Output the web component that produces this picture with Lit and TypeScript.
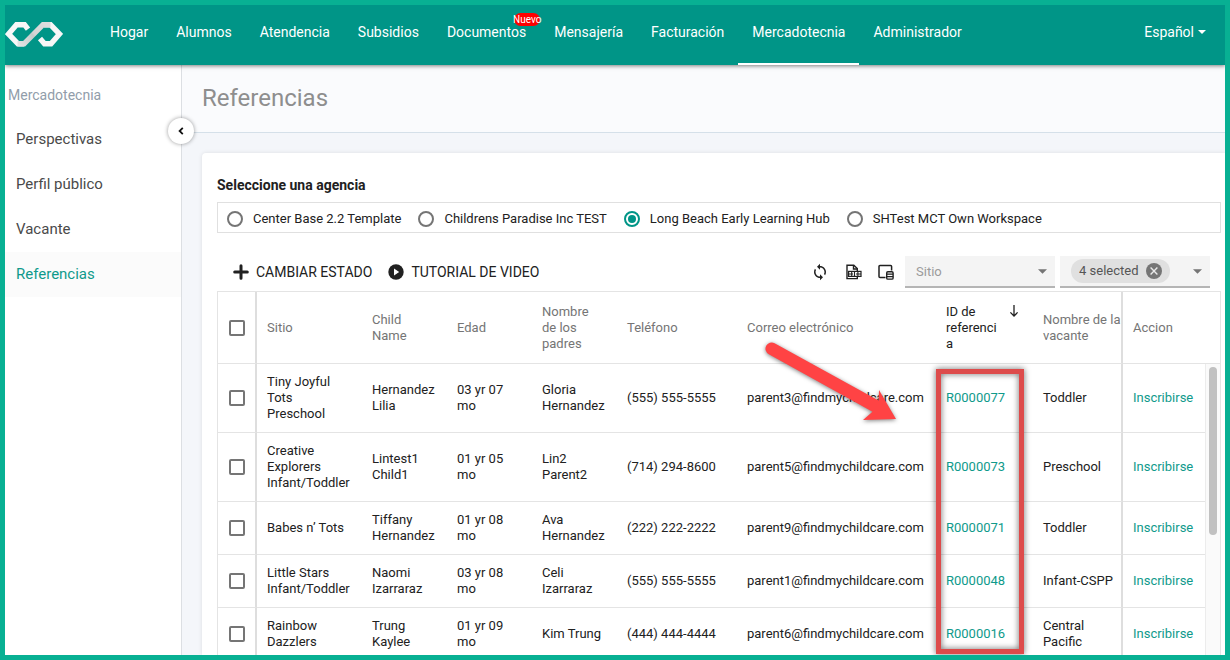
import { LitElement, html, css, svg, nothing } from "lit";
import { customElement, state } from "lit/decorators.js";
import { classMap } from "lit/directives/class-map.js";

interface Referral {
  site: string;
  child: string;
  age: string;
  parent: string;
  phone: string;
  email: string;
  id: string;
  vacancy: string;
}

const NAV = ["Hogar", "Alumnos", "Atendencia", "Subsidios", "Documentos", "Mensajería", "Facturación", "Mercadotecnia", "Administrador"];
const SIDE = ["Perspectivas", "Perfil público", "Vacante", "Referencias"];
const AGENCIES = ["Center Base 2.2 Template", "Childrens Paradise Inc TEST", "Long Beach Early Learning Hub", "SHTest MCT Own Workspace"];

const ROWS: Referral[] = [
  { site: "Tiny Joyful Tots Preschool", child: "Hernandez Lilia", age: "03 yr 07 mo", parent: "Gloria Hernandez", phone: "(555) 555-5555", email: "parent3@findmychildcare.com", id: "R0000077", vacancy: "Toddler" },
  { site: "Creative Explorers Infant/Toddler", child: "Lintest1 Child1", age: "01 yr 05 mo", parent: "Lin2 Parent2", phone: "(714) 294-8600", email: "parent5@findmychildcare.com", id: "R0000073", vacancy: "Preschool" },
  { site: "Babes n’ Tots", child: "Tiffany Hernandez", age: "01 yr 08 mo", parent: "Ava Hernandez", phone: "(222) 222-2222", email: "parent9@findmychildcare.com", id: "R0000071", vacancy: "Toddler" },
  { site: "Little Stars Infant/Toddler", child: "Naomi Izarraraz", age: "03 yr 08 mo", parent: "Celi Izarraraz", phone: "(555) 555-5555", email: "parent1@findmychildcare.com", id: "R0000048", vacancy: "Infant-CSPP" },
  { site: "Rainbow Dazzlers", child: "Trung Kaylee", age: "01 yr 09 mo", parent: "Kim Trung", phone: "(444) 444-4444", email: "parent6@findmychildcare.com", id: "R0000016", vacancy: "Central Pacific" },
];

const caret = svg`<path d="M0 0H10L5 5Z" fill="currentColor"/>`;

@customElement("app-root")
export class AppRoot extends LitElement {
  @state() private agency = 2;

  static styles = css`
    :host {
      display: block;
      font-family: Roboto, "Liberation Sans", sans-serif;
      font-size: 13px;
      line-height: 16px;
      color: #212121;
    }
    * { box-sizing: border-box; }
    a { text-decoration: none; color: inherit; }
    button, select, input { font: inherit; color: inherit; margin: 0; }
    button { background: none; border: 0; padding: 0; cursor: pointer; }
    svg { display: block; flex: none; }

    .frame {
      height: 100vh;
      border: 5px solid #08b093;
      overflow: hidden;
      display: flex;
      flex-direction: column;
      background: #f4f6fa;
    }
    .top {
      flex: none;
      height: 60px;
      display: flex;
      align-items: stretch;
      background: #009587;
      color: #fff;
      font-size: 14px;
      position: relative;
      z-index: 2;
      box-shadow: 0 1px 4px rgba(0, 0, 0, 0.5);
    }
    .logo { padding-top: 16px; margin-right: 33px; }
    .nav { display: flex; flex: 1; }
    .nav-link {
      padding: 0 14px;
      line-height: 54px;
      border-bottom: 2px solid transparent;
      white-space: nowrap;
    }
    .nav-link.active { border-color: #fff; }
    .nav-label { position: relative; display: inline-block; }
    .badge {
      position: absolute;
      right: -14px;
      top: 8px;
      width: 26px;
      height: 13px;
      border-radius: 7px;
      background: #f00;
      font-size: 10px;
      line-height: 14px;
      display: flex;
      justify-content: center;
    }
    .lang {
      display: flex;
      align-items: center;
      gap: 4px;
      height: 54px;
      padding-right: 19px;
    }
    .body { flex: 1; display: flex; min-height: 0; }
    .side {
      flex: none;
      width: 177px;
      background: #fff;
      border-right: 1px solid #dcdfe3;
      position: relative;
      z-index: 1;
      padding-top: 9px;
    }
    .side-title {
      margin: 0;
      padding: 0 3px;
      font-size: 14px;
      font-weight: 400;
      line-height: 43px;
      color: #919daa;
    }
    .side-link {
      display: block;
      padding: 0 11px;
      font-size: 15px;
      line-height: 45px;
      color: #4a4a4a;
    }
    .side-link.active { color: #0f9a8b; background: #fbfbfb; }
    .collapse {
      position: absolute;
      right: -13px;
      top: 53px;
      width: 26px;
      height: 26px;
      border-radius: 50%;
      background: #fff;
      box-shadow: 0 0 4px rgba(0, 0, 0, 0.4);
      display: grid;
      place-items: center;
    }
    .main { flex: 1; min-width: 0; display: flex; flex-direction: column; }
    .page-head {
      flex: none;
      height: 68px;
      background: #fafbfd;
      border-bottom: 1px solid #d5e0e9;
      padding: 0 20px;
    }
    .page-head h1 {
      margin: 0;
      font-size: 24px;
      font-weight: 400;
      line-height: 66px;
      color: #8e8e8e;
    }
    .card {
      flex: 1;
      margin: 20px 0 0 20px;
      padding: 24px 4px 0 15px;
      background: #fff;
      border-radius: 4px 0 0 0;
      box-shadow: 0 0 4px rgba(0, 0, 0, 0.1);
      min-height: 0;
    }
    .agencies { margin: 0; padding: 0; border: 0; min-width: 0; }
    .agencies legend { padding: 0; margin-bottom: 9px; font-size: 14px; font-weight: 700; }
    .radios {
      border: 1px solid #e0e0e0;
      padding: 3px 9px 0;
      height: 31px;
      display: flex;
      align-items: center;
      gap: 17px;
    }
    .radio { display: flex; align-items: center; gap: 10px; white-space: nowrap; }
    .radio input {
      appearance: none;
      width: 16px;
      height: 16px;
      border: 2px solid #757575;
      border-radius: 50%;
      display: grid;
      place-items: center;
    }
    .radio input:checked { border-color: #009587; }
    .radio input:checked::before {
      content: "";
      width: 8px;
      height: 8px;
      border-radius: 50%;
      background: #009587;
    }
    .tools {
      margin: 23px 0 3px;
      padding: 0 11px 0 16px;
      height: 32px;
      display: flex;
      align-items: center;
    }
    .action { display: flex; align-items: center; gap: 7px; margin-right: 16px; font-size: 14px; text-transform: uppercase; white-space: nowrap; }
    .icons { display: flex; gap: 16px; margin-left: auto; }
    .field {
      width: 150px;
      height: 32px;
      margin-left: 5px;
      background: #f4f4f4;
      border-bottom: 2px solid #b5b5b5;
      display: grid;
      align-items: center;
      color: #757575;
    }
    .field.first { margin-left: 11px; }
    .field > * { grid-area: 1 / 1; }
    .field > svg { justify-self: end; margin-right: 8px; pointer-events: none; }
    .field select { appearance: none; border: 0; background: transparent; outline: 0; padding: 0; }
    .field .wide { width: 100%; height: 30px; padding: 2px 11px 0; color: #9b9b9b; }
    .chip {
      justify-self: start;
      margin-left: 11px;
      height: 24px;
      width: 99px;
      padding: 0 8px;
      border-radius: 12px;
      background: #e0e0e0;
      color: #555;
      display: flex;
      align-items: center;
      justify-content: space-between;
    }

    .grid-wrap { position: relative; border: 1px solid #e4e4e4; }
    table { width: 100%; table-layout: fixed; border-collapse: separate; border-spacing: 0; }
    .c-check { width: 39px; }
    .c-site { width: 105px; }
    .c-name { width: 85px; }
    .c-phone { width: 120px; }
    .c-id { width: 97px; }
    .c-vac { width: 90px; }
    .c-act { width: 82px; }
    .c-bar { width: 15px; }
    th, td {
      padding: 10px;
      border-bottom: 1px solid #e4e4e4;
      text-align: left;
      font-weight: 400;
      vertical-align: middle;
    }
    th { height: 72px; color: #757575; }
    .split { border-right: 2px solid #dedede; padding-right: 0; }
    .check { padding-left: 11px; }
    .check input {
      appearance: none;
      display: block;
      width: 16px;
      height: 16px;
      border: 2px solid #757575;
      border-radius: 2px;
    }
    .sorted { display: flex; color: #212121; }
    .sorted span { width: 54px; overflow-wrap: anywhere; }
    .sorted svg { margin: 1px 0 0 9px; }
    .green { color: #0f9a8b; }
    .bar { padding: 3px; vertical-align: top; background: #fafafa; border-left: 1px solid #ececec; }
    .thumb { width: 8px; height: 168px; border-radius: 4px; background: #c1c1c1; }
    .mark {
      position: absolute;
      right: 196px;
      top: 77px;
      width: 88px;
      height: 285px;
      border: 5px solid #dd4b4b;
      filter: drop-shadow(0 0 3px rgba(0, 0, 0, 0.6));
      pointer-events: none;
    }
    .arrow { position: absolute; right: 318px; top: 48px; pointer-events: none; filter: drop-shadow(0 1px 2px rgba(0, 0, 0, 0.5)); }
  `;

  render() {
    return html`
      <div class="frame">
        <header class="top">
          <a class="logo" href="#" aria-label="Inicio">
            <svg width="58" height="26" viewBox="0 0 58 26" fill="none" stroke-width="5.4">
              <defs>
                <linearGradient id="band" x1="14" y1="24" x2="40" y2="2" gradientUnits="userSpaceOnUse">
                  <stop offset="0" stop-color="#e3e3e3" />
                  <stop offset="0.5" stop-color="#c4cbcb" />
                  <stop offset="0.55" stop-color="#d4d4d4" />
                  <stop offset="1" stop-color="#dddddd" />
                </linearGradient>
              </defs>
              <path d="M23 8.2 19.5 3.7H11.5L3.5 13 13 22.8H19" stroke="#f7f7f7" />
              <path d="M35 17.6 39.5 22.8H46L54.5 13 45.5 3.7H39" stroke="#f7f7f7" />
              <path d="M12.5 22.8H19L38 3.7H45.5" stroke="url(#band)" />
            </svg>
          </a>
          <nav class="nav">
            ${NAV.map(
              (n) => html`<a href="#" class=${classMap({ "nav-link": true, active: n === "Mercadotecnia" })}
                ><span class="nav-label">${n}${n === "Documentos" ? html`<span class="badge">Nuevo</span>` : nothing}</span></a
              >`
            )}
          </nav>
          <button class="lang" aria-haspopup="menu">Español <svg width="8" height="4" viewBox="0 0 10 5">${caret}</svg></button>
        </header>
        <div class="body">
          <aside class="side">
            <h2 class="side-title">Mercadotecnia</h2>
            ${SIDE.map((s) => html`<a href="#" class=${classMap({ "side-link": true, active: s === "Referencias" })}>${s}</a>`)}
            <button class="collapse" aria-label="Contraer menú">
              <svg width="6" height="8" viewBox="0 0 6 8" fill="none" stroke="#111" stroke-width="1.8"><path d="M4.8.8 1.6 4 4.8 7.2" /></svg>
            </button>
          </aside>
          <main class="main">
            <div class="page-head"><h1>Referencias</h1></div>
            <section class="card">
              <fieldset class="agencies">
                <legend>Seleccione una agencia</legend>
                <div class="radios">
                  ${AGENCIES.map(
                    (a, i) => html`<label class="radio"
                      ><input type="radio" name="agency" .checked=${i === this.agency} @change=${() => (this.agency = i)} />${a}</label
                    >`
                  )}
                </div>
              </fieldset>
              <div class="tools">
                <button class="action">
                  <svg width="16" height="16" viewBox="0 0 16 16" stroke="#212121" stroke-width="3" stroke-linecap="round"><path d="M8 1.7V14.3M1.7 8H14.3" /></svg>
                  Cambiar estado
                </button>
                <button class="action">
                  <svg width="16" height="16" viewBox="0 0 16 16"><circle cx="8" cy="8" r="7.7" fill="#212121" /><path d="M6 4.6 11.2 8 6 11.4Z" fill="#fff" /></svg>
                  Tutorial de video
                </button>
                <div class="icons">
                  <button aria-label="Actualizar">
                    <svg width="18" height="18" viewBox="0 0 24 24" fill="#212121">
                      <path d="M12 4V1L8 5l4 4V6c3.31 0 6 2.69 6 6 0 1.01-.25 1.97-.7 2.8l1.46 1.46C19.54 15.03 20 13.57 20 12c0-4.42-3.58-8-8-8zm0 14c-3.31 0-6-2.69-6-6 0-1.01.25-1.97.7-2.8L5.24 7.74C4.46 8.97 4 10.43 4 12c0 4.42 3.58 8 8 8v3l4-4-4-4v3z" />
                    </svg>
                  </button>
                  <button aria-label="Exportar CSV">
                    <svg width="17" height="16" viewBox="0 0 17 16" fill="none" stroke="#212121" stroke-width="1.4">
                      <path d="M12.3 7V4.6L8.8 1.2H2V14.6H12.3V13" />
                      <path d="M8.5 1.2V5H12.3" />
                      <rect x="3.6" y="7.4" width="12.4" height="5" stroke-width="1.2" />
                      <path d="M6.7 7.4V12.4M9.5 7.4V12.4M12.9 7.4V12.4M3.6 10H8M11 10H16" stroke-width="1.1" />
                    </svg>
                  </button>
                  <button aria-label="Columnas">
                    <svg width="16" height="16" viewBox="0 0 16 16" fill="none" stroke="#212121" stroke-width="1.5">
                      <path d="M7.5 13.6H2A1 1 0 0 1 1 12.6V2.4A1 1 0 0 1 2 1.4H12.6A1 1 0 0 1 13.6 2.4V6.5" />
                      <rect x="8.7" y="7.7" width="6.4" height="7.4" rx="1.2" fill="#fff" stroke-width="1.4" />
                      <path d="M8.7 10.2H15.1M8.7 12.6H15.1" stroke-width="1.2" />
                    </svg>
                  </button>
                </div>
                <div class="field first">
                  <select class="wide" aria-label="Sitio"><option>Sitio</option></select>
                  <svg width="9" height="5" viewBox="0 0 10 5">${caret}</svg>
                </div>
                <div class="field">
                  <div class="chip">
                    <select aria-label="Estado"><option>4 selected</option></select>
                    <button aria-label="Quitar selección">
                      <svg width="16" height="16" viewBox="0 0 16 16"><circle cx="8" cy="8" r="8" fill="#757575" /><path d="M4.6 4.6 11.4 11.4M11.4 4.6 4.6 11.4" stroke="#e8e8e8" stroke-width="1.4" /></svg>
                    </button>
                  </div>
                  <svg width="9" height="5" viewBox="0 0 10 5">${caret}</svg>
                </div>
              </div>
              <div class="grid-wrap">
                <table>
                  <colgroup>
                    <col class="c-check" /><col class="c-site" /><col class="c-name" /><col class="c-name" /><col class="c-name" /><col class="c-phone" />
                    <col /><col class="c-id" /><col class="c-vac" /><col class="c-act" /><col class="c-bar" />
                  </colgroup>
                  <thead>
                    <tr>
                      <th class="check split"><input type="checkbox" aria-label="Seleccionar todo" /></th>
                      <th>Sitio</th>
                      <th>Child<br />Name</th>
                      <th>Edad</th>
                      <th>Nombre<br />de los<br />padres</th>
                      <th>Teléfono</th>
                      <th>Correo electrónico</th>
                      <th aria-sort="descending">
                        <div class="sorted">
                          <span>ID de referencia</span>
                          <svg width="10" height="12" viewBox="0 0 10 12" fill="none" stroke="#212121" stroke-width="1.3"><path d="M5 0V11M1.4 7.4 5 11 8.6 7.4" /></svg>
                        </div>
                      </th>
                      <th class="split">Nombre de la vacante</th>
                      <th colspan="2">Accion</th>
                    </tr>
                  </thead>
                  <tbody>
                    ${ROWS.map(
                      (r, i) => html`<tr>
                        <td class="check split"><input type="checkbox" aria-label=${"Seleccionar " + r.id} /></td>
                        <td>${r.site}</td>
                        <td>${r.child}</td>
                        <td>${r.age}</td>
                        <td>${r.parent}</td>
                        <td>${r.phone}</td>
                        <td>${r.email}</td>
                        <td><a class="green" href="#">${r.id}</a></td>
                        <td class="split">${r.vacancy}</td>
                        <td><a class="green" href="#">Inscribirse</a></td>
                        ${i === 0 ? html`<td class="bar" rowspan=${ROWS.length} aria-hidden="true"><div class="thumb"></div></td>` : nothing}
                      </tr>`
                    )}
                  </tbody>
                </table>
                <div class="mark"></div>
                <svg class="arrow" width="140" height="90" viewBox="0 0 140 90">
                  <path d="M12.6 3.2 116.6 60.4 117 50 134 79 101 80 110.5 71.7 6.8 14.2A6.2 6.2 0 0 1 12.6 3.2Z" fill="#ff4344" />
                </svg>
              </div>
            </section>
          </main>
        </div>
      </div>
    `;
  }
}
